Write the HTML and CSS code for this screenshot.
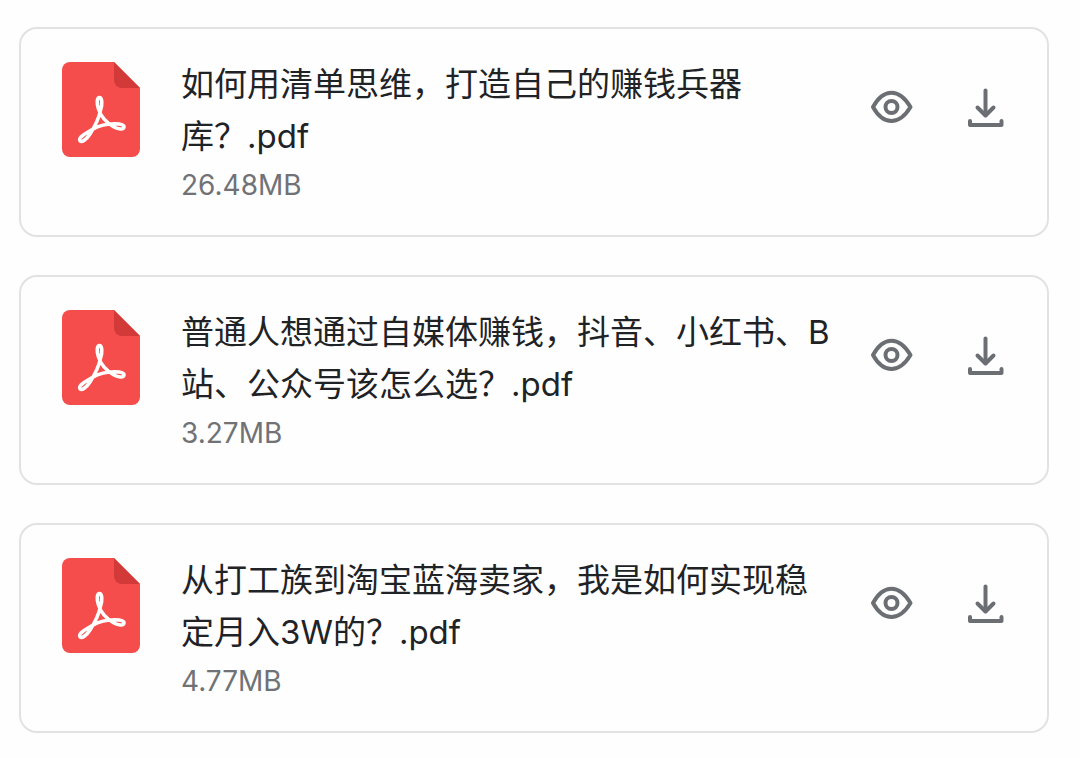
FILE: index.html
```html
<!DOCTYPE html>
<html lang="zh-CN">
<head>
  <meta charset="UTF-8" />
  <meta name="viewport" content="width=device-width, initial-scale=1.0"/>
  <title>文件列表</title>
  <link rel="stylesheet" href="styles.css">
</head>
<body>
  <!-- shared icons -->
  <svg class="icon-defs" aria-hidden="true">
    <symbol id="icon-pdf" viewBox="0 0 78 95">
      <path fill="#f54c4c" d="M8 0H52L78 26V87a8 8 0 0 1-8 8H8a8 8 0 0 1-8-8V8a8 8 0 0 1 8-8z"/>
      <path fill="#d23a39" d="M52 0L78 26H60a8 8 0 0 1-8-8z"/>
      <path fill="none" stroke="#fff" stroke-width="3.6" stroke-linejoin="round" d="M37.400 35.600C34.800 35.600 34.600 42 36.500 47C39 55 44 60.500 52 65C56 67.200 61.800 68 62 65C62.200 61.800 54 61.200 46 62.200C38 63 32 66 26 70C20 73.500 16.500 76.500 18 78.800C19.600 81 24.500 77.500 28 72C32.500 65 37 56 38.600 48C40.500 42 40.200 35.600 37.400 35.600Z"/>
    </symbol>
    <symbol id="icon-eye" viewBox="0 0 44 44">
      <g fill="none" stroke="#6b6e73" stroke-width="4" stroke-linejoin="round">
        <path d="M3 22C8 13 14.500 7.800 21.500 7.800S35 13 40.500 22C35 31 28.500 36 21.500 36S8 31 3 22z"/>
        <circle cx="21.500" cy="22" r="6"/>
      </g>
    </symbol>
    <symbol id="icon-download" viewBox="0 0 44 44">
      <g fill="none" stroke="#6b6e73" stroke-width="4" stroke-linecap="round" stroke-linejoin="round">
        <path d="M21.500 5.500V30"/>
        <path d="M13.500 22.500L21.500 30.500L29.500 22.500"/>
        <path d="M6 36V40H37.500V36"/>
      </g>
    </symbol>
  </svg>

  <main class="file-list">
    <article class="file-card">
      <svg class="file-icon" aria-hidden="true"><use href="#icon-pdf"/></svg>
      <div class="file-info">
        <div class="file-name">如何用清单思维，打造自己的赚钱兵器库？.pdf</div>
        <div class="file-size">26.48MB</div>
      </div>
      <div class="file-actions">
        <button type="button" aria-label="预览"><svg><use href="#icon-eye"/></svg></button>
        <button type="button" aria-label="下载"><svg><use href="#icon-download"/></svg></button>
      </div>
    </article>

    <article class="file-card">
      <svg class="file-icon" aria-hidden="true"><use href="#icon-pdf"/></svg>
      <div class="file-info">
        <div class="file-name">普通人想通过自媒体赚钱，抖音、小红书、B站、公众号该怎么选？.pdf</div>
        <div class="file-size">3.27MB</div>
      </div>
      <div class="file-actions">
        <button type="button" aria-label="预览"><svg><use href="#icon-eye"/></svg></button>
        <button type="button" aria-label="下载"><svg><use href="#icon-download"/></svg></button>
      </div>
    </article>

    <article class="file-card">
      <svg class="file-icon" aria-hidden="true"><use href="#icon-pdf"/></svg>
      <div class="file-info">
        <div class="file-name">从打工族到淘宝蓝海卖家，我是如何实现稳定月入3W的？.pdf</div>
        <div class="file-size">4.77MB</div>
      </div>
      <div class="file-actions">
        <button type="button" aria-label="预览"><svg><use href="#icon-eye"/></svg></button>
        <button type="button" aria-label="下载"><svg><use href="#icon-download"/></svg></button>
      </div>
    </article>
  </main>
</body>
</html>
```
FILE: styles.css
```css
:root {
  --text: #1f2326;
  --muted: #707275;
  --border: #e2e2e2;
}

* {
  box-sizing: border-box;
}

body {
  margin: 0;
  background: #fefefe;
  color: var(--text);
  font-family: Inter, 'Noto Sans CJK SC', sans-serif;
}

.icon-defs {
  display: none;
}

.file-list {
  display: flex;
  flex-direction: column;
  gap: 38px;
  padding: 27px 31px 24px 19px;
}

.file-card {
  display: flex;
  align-items: flex-start;
  padding: 29px 39px 27px 41px;
  border: 2px solid var(--border);
  border-radius: 18px;
}

.file-icon {
  flex: none;
  width: 78px;
  height: 95px;
  margin-top: 4px;
}

.file-info {
  flex: 1;
  min-width: 0;
  margin: 0 32px 0 41px;
}

.file-name {
  font-size: 33px;
  line-height: 52px;
}

.file-size {
  color: var(--muted);
  font-size: 28px;
  line-height: 46px;
}

.file-actions {
  display: flex;
  flex: none;
  gap: 50px;
  margin-top: 27px;
}

.file-actions button {
  width: 44px;
  height: 44px;
  padding: 0;
  border: none;
  background: none;
  cursor: pointer;
}

.file-actions svg {
  display: block;
  width: 44px;
  height: 44px;
}
```
